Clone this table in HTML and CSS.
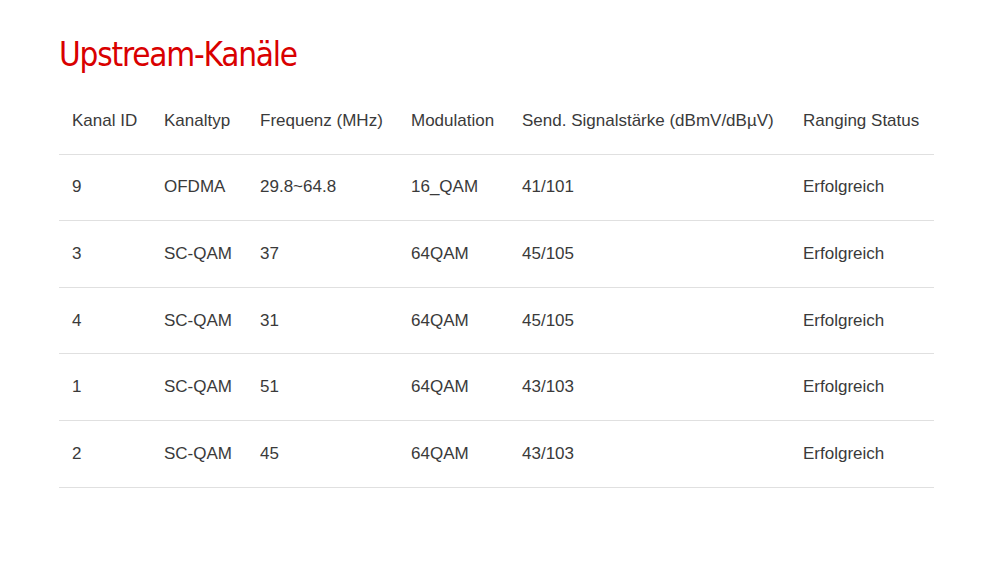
FILE: index.html
```html
<!DOCTYPE html>
<html lang="de">
<head>
<meta charset="utf-8">
<title>Upstream-Kanäle</title>
<link rel="stylesheet" href="styles.css">
</head>
<body>
<main class="page">
  <h1 class="title">Upstream-Kanäle</h1>
  <table class="channels">
    <colgroup>
      <col class="c1"><col class="c2"><col class="c3"><col class="c4"><col class="c5"><col class="c6">
    </colgroup>
    <thead>
      <tr><th>Kanal ID</th><th>Kanaltyp</th><th>Frequenz (MHz)</th><th>Modulation</th><th>Send. Signalstärke (dBmV/dBµV)</th><th>Ranging Status</th></tr>
    </thead>
    <tbody>
      <tr><td>9</td><td>OFDMA</td><td>29.8~64.8</td><td>16_QAM</td><td>41/101</td><td>Erfolgreich</td></tr>
      <tr><td>3</td><td>SC-QAM</td><td>37</td><td>64QAM</td><td>45/105</td><td>Erfolgreich</td></tr>
      <tr><td>4</td><td>SC-QAM</td><td>31</td><td>64QAM</td><td>45/105</td><td>Erfolgreich</td></tr>
      <tr><td>1</td><td>SC-QAM</td><td>51</td><td>64QAM</td><td>43/103</td><td>Erfolgreich</td></tr>
      <tr><td>2</td><td>SC-QAM</td><td>45</td><td>64QAM</td><td>43/103</td><td>Erfolgreich</td></tr>
    </tbody>
  </table>
</main>
</body>
</html>
```

FILE: styles.css
```css
html, body {
  margin: 0;
  padding: 0;
  background: #ffffff;
}
.page {
  padding: 34px 0 0 59px;
  width: 875px;
}
.title {
  margin: 0;
  font-family: "DejaVu Sans Condensed", "DejaVu Sans", sans-serif;
  font-weight: normal;
  font-size: 33px;
  letter-spacing: -1.2px;
  line-height: 42px;
  color: #d90000;
}
.channels {
  margin-top: 12px;
  width: 875px;
  border-collapse: collapse;
  table-layout: fixed;
  font-family: "Liberation Sans", Arial, sans-serif;
  font-size: 17px;
  color: #3a3a3a;
}
.c1 { width: 92px; }
.c2 { width: 96px; }
.c3 { width: 151px; }
.c4 { width: 111px; }
.c5 { width: 281px; }
.c6 { width: 144px; }
.channels th,
.channels td {
  text-align: left;
  font-weight: normal;
  height: 65.6px;
  padding: 0 0 0 13px;
  vertical-align: middle;
  white-space: nowrap;
  border-bottom: 1px solid #e0e0e0;
}
```
